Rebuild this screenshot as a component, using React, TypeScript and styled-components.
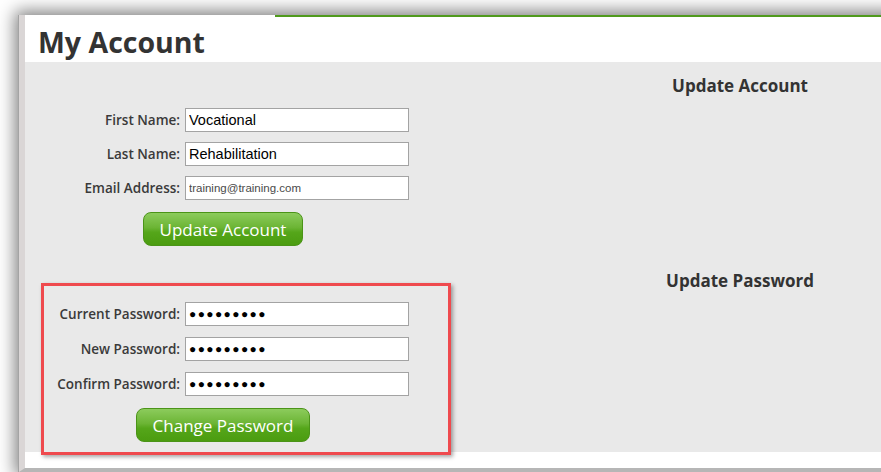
import React from "react";
import styled, {createGlobalStyle} from "styled-components";

const GlobalStyle = createGlobalStyle`
  html, body {
    margin: 0;
    padding: 0;
    background: #fff;
  }
  body {
    font-family: "Open Sans", "Liberation Sans", sans-serif;
    color: #333;
  }
`;

const Stage = styled.div`
  width: 881px;
  height: 472px;
  overflow: hidden;
  padding: 15px 0 0 19px;
  box-sizing: border-box;
`;

const Frame = styled.div`
  margin-right: -40px;
  background: #fff;
  border-left: 6px solid #dad6d6;
  border-bottom: 4px solid #b6b6b6;
  box-shadow: -1px 0 0 #a4a4a4, 0 0 16px 4px rgba(0, 0, 0, 0.5);
  display: flex;
  flex-direction: column;
`;

const TopBar = styled.div`
  display: flex;
  height: 2px;
`;

const TopSpacer = styled.div`
  width: 250px;
`;

const GreenRule = styled.div`
  flex: 1;
  background: #4f9a1c;
`;

const TitleRow = styled.div`
  height: 45px;
  padding: 6px 0 0 13px;
  box-sizing: border-box;
`;

const Title = styled.h1`
  margin: 0;
  font-size: 28.5px;
  line-height: 39px;
  font-weight: 700;
  color: #333;
`;

const Panel = styled.div`
  position: relative;
  height: 390px;
  padding-top: 14px;
  box-sizing: border-box;
  background: #e9e9e9;
`;

const SectionHeading = styled.h2<{ $top?: number }>`
  margin: ${p => p.$top ?? 0}px 0 0 615px;
  width: 200px;
  text-align: center;
  font-size: 17px;
  line-height: 20px;
  font-weight: 700;
  color: #333;
`;

const FormGrid = styled.div<{ $top: number, $gap: number }>`
  display: grid;
  grid-template-columns: 155px 224px;
  column-gap: 5px;
  row-gap: ${p => p.$gap}px;
  align-items: center;
  margin-top: ${p => p.$top}px;
`;

const Label = styled.label`
  text-align: right;
  font-size: 13.5px;
  font-weight: 600;
  color: #3a3a3a;
  white-space: nowrap;
`;

const Field = styled.input<{ $small?: boolean, $dots?: boolean }>`
  height: 24px;
  box-sizing: border-box;
  border: 1px solid #a3a3a3;
  background: #fff;
  padding: 0 3px;
  outline: none;
  font-family: "Liberation Sans", Arial, sans-serif;
  font-size: ${p => p.$small ? '11.5px' : p.$dots ? '12px' : '14.5px'};
  letter-spacing: ${p => p.$dots ? '1.4px' : 'normal'};
  color: ${p => p.$small ? '#4a4a4a' : '#000'};
`;

const ButtonRow = styled.div`
  width: 396px;
  display: flex;
  justify-content: center;
  margin-top: 12px;
`;

const GreenButton = styled.button`
  height: 34px;
  padding: 0 16px;
  border: 1px solid #4b9418;
  border-radius: 8px;
  background: linear-gradient(#8ccb5c 0%, #6cb535 45%, #55a61a 60%, #4b9c10 100%);
  color: #fff;
  font-family: "Open Sans", "Liberation Sans", sans-serif;
  font-size: 17px;
  cursor: pointer;
`;

const Highlight = styled.div`
  position: absolute;
  left: 16px;
  top: 221px;
  width: 410px;
  height: 172px;
  box-sizing: border-box;
  border: 3px solid #ef4a4e;
  box-shadow: 2px 2px 4px rgba(0, 0, 0, 0.35);
  pointer-events: none;
`;

const BottomStrip = styled.div`
  height: 16px;
`;

const dots = '●●●●●●●●●';

export default function App() {
    return (
        <>
            <GlobalStyle/>
            <Stage>
                <Frame>
                    <TopBar>
                        <TopSpacer/>
                        <GreenRule/>
                    </TopBar>
                    <TitleRow>
                        <Title>My Account</Title>
                    </TitleRow>
                    <Panel>
                        <SectionHeading>Update Account</SectionHeading>
                        <FormGrid $top={12} $gap={10}>
                            <Label>First Name:</Label>
                            <Field readOnly value="Vocational"/>
                            <Label>Last Name:</Label>
                            <Field readOnly value="Rehabilitation"/>
                            <Label>Email Address:</Label>
                            <Field readOnly $small value="training@training.com"/>
                        </FormGrid>
                        <ButtonRow>
                            <GreenButton>Update Account</GreenButton>
                        </ButtonRow>

                        <SectionHeading $top={25}>Update Password</SectionHeading>
                        <FormGrid $top={11} $gap={11}>
                            <Label>Current Password:</Label>
                            <Field readOnly $dots value={dots}/>
                            <Label>New Password:</Label>
                            <Field readOnly $dots value={dots}/>
                            <Label>Confirm Password:</Label>
                            <Field readOnly $dots value={dots}/>
                        </FormGrid>
                        <ButtonRow>
                            <GreenButton>Change Password</GreenButton>
                        </ButtonRow>
                        <Highlight/>
                    </Panel>
                    <BottomStrip/>
                </Frame>
            </Stage>
        </>
    );
}
